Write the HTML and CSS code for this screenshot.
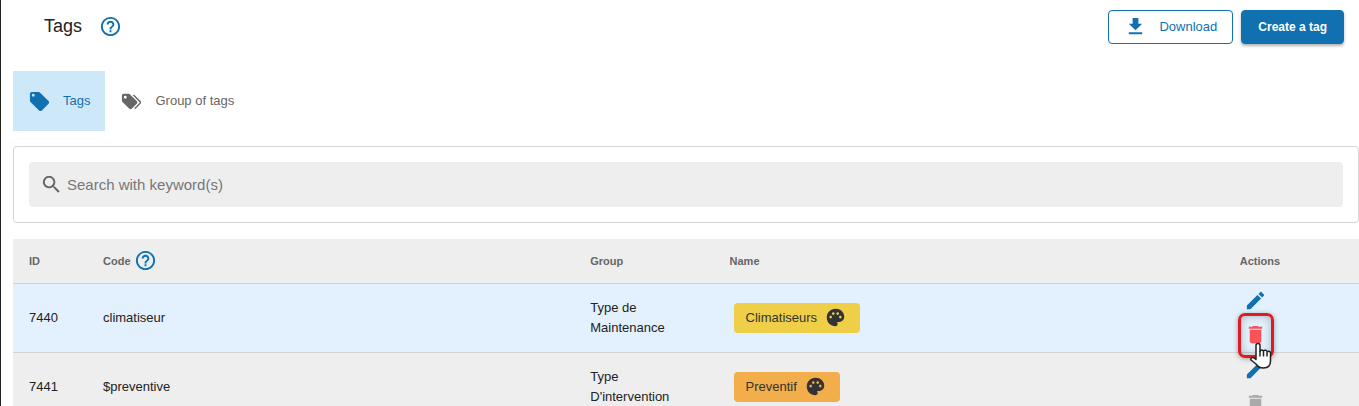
FILE: index.html
```html
<!DOCTYPE html>
<html lang="en">
<head>
<meta charset="utf-8">
<title>Tags</title>
<link rel="stylesheet" href="styles.css">
</head>
<body>
<svg class="sprite" aria-hidden="true">
  <symbol id="help" viewBox="0 0 24 24"><path d="M11 18h2v-2h-2v2zm1-16C6.480 2 2 6.480 2 12s4.480 10 10 10 10-4.480 10-10S17.520 2 12 2zm0 18c-4.410 0-8-3.590-8-8s3.590-8 8-8 8 3.590 8 8-3.590 8-8 8zm0-14c-2.210 0-4 1.790-4 4h2c0-1.100.9-2 2-2s2 .9 2 2c0 2-3 1.750-3 5h2c0-2.250 3-2.500 3-5 0-2.210-1.790-4-4-4z"/></symbol>
  <symbol id="tag" viewBox="0 0 24 24"><path d="M21.410 11.580l-9-9C12.050 2.220 11.550 2 11 2H4c-1.100 0-2 .9-2 2v7c0 .55.22 1.050.59 1.420l9 9c.36.36.86.58 1.410.58s1.050-.22 1.410-.59l7-7c.37-.36.59-.86.59-1.410s-.23-1.060-.59-1.420zM5.500 7C4.670 7 4 6.330 4 5.500S4.670 4 5.500 4 7 4.670 7 5.500 6.330 7 5.500 7z"/></symbol>
  <symbol id="tags" viewBox="0 0 24 24"><path d="M5.500 9A1.500 1.500 0 1 0 5.500 6a1.500 1.500 0 0 0 0 3m11.910 2.580c.36.360.59.860.59 1.420 0 .55-.22 1.050-.59 1.410l-5 5a1.996 1.996 0 0 1-2.830 0l-6.990-6.990C2.220 12.050 2 11.550 2 11V6c0-1.110.89-2 2-2h5c.55 0 1.050.22 1.410.58l7 7m-3.870-5.870l1-1 6.870 6.870c.37.360.59.870.59 1.420s-.22 1.050-.58 1.410l-5.380 5.380-1-1L20.750 13l-7.210-7.290z"/></symbol>
  <symbol id="download" viewBox="0 0 24 24"><path d="M19 9h-4V3H9v6H5l7 7 7-7zM5 18v2h14v-2H5z"/></symbol>
  <symbol id="search" viewBox="0 0 24 24"><path d="M15.500 14h-.79l-.28-.27C15.410 12.590 16 11.110 16 9.500 16 5.910 13.090 3 9.500 3S3 5.910 3 9.500 5.910 16 9.500 16c1.610 0 3.090-.59 4.230-1.570l.27.28v.79l5 4.990L20.490 19l-4.990-5zm-6 0C7.010 14 5 11.990 5 9.500S7.010 5 9.500 5 14 7.010 14 9.500 11.990 14 9.500 14z"/></symbol>
  <symbol id="palette" viewBox="0 0 24 24"><path d="M12 2C6.490 2 2 6.490 2 12s4.490 10 10 10c1.380 0 2.500-1.120 2.500-2.500 0-.61-.23-1.200-.64-1.670-.08-.1-.13-.21-.13-.33 0-.28.22-.5.5-.5H16c3.310 0 6-2.690 6-6 0-4.960-4.490-9-10-9zm5.500 11c-.83 0-1.500-.67-1.500-1.500s.67-1.500 1.500-1.500 1.500.67 1.500 1.500-.67 1.500-1.500 1.500zm-3-4c-.83 0-1.500-.67-1.500-1.500S13.670 6 14.500 6s1.500.67 1.500 1.500S15.330 9 14.500 9zM5 11.500c0-.83.67-1.500 1.500-1.500s1.500.67 1.500 1.500S7.330 13 6.500 13 5 12.330 5 11.500zm6-4C11 8.330 10.330 9 9.500 9S8 8.330 8 7.500 8.670 6 9.500 6s1.500.67 1.500 1.500z"/></symbol>
  <symbol id="edit" viewBox="0 0 24 24"><path d="M3 17.250V21h3.750L17.810 9.940l-3.750-3.750L3 17.250zM20.710 7.040c.39-.39.39-1.020 0-1.410l-2.340-2.340c-.39-.39-1.020-.39-1.410 0l-1.830 1.830 3.750 3.750 1.830-1.830z"/></symbol>
  <symbol id="delete" viewBox="0 0 24 24"><path d="M6 19c0 1.100.9 2 2 2h8c1.100 0 2-.9 2-2V7H6v12zM19 4h-3.500l-1-1h-5l-1 1H5v2h14V4z"/></symbol>
</svg>
<main class="page">
  <header class="header">
    <h1 class="title">Tags</h1>
    <button class="help-button" type="button" aria-label="Help"><svg class="icon-large"><use href="#help"/></svg></button>
    <div class="header-actions">
      <button class="button button-outline" type="button"><svg class="icon-large"><use href="#download"/></svg>Download</button>
      <button class="button button-primary" type="button">Create a tag</button>
    </div>
  </header>
  <nav class="tabs">
    <a class="tab tab-active" href="#tags-tab"><svg class="icon-large"><use href="#tag"/></svg>Tags</a>
    <a class="tab" href="#groups-tab"><svg class="icon-large"><use href="#tags"/></svg>Group of tags</a>
  </nav>
  <div class="search-panel">
    <label class="search-box"><svg class="icon-large"><use href="#search"/></svg>
      <input class="search-input" type="text" placeholder="Search with keyword(s)" aria-label="Search with keyword(s)"></label>
  </div>
  <table class="table">
    <colgroup><col class="col-id"><col class="col-code"><col class="col-group"><col class="col-name"><col></colgroup>
    <thead>
      <tr><th>ID</th><th><span class="code-heading">Code <button class="help-button" type="button" aria-label="Help about codes"><svg class="icon-large"><use href="#help"/></svg></button></span></th><th>Group</th><th>Name</th><th>Actions</th></tr>
    </thead>
    <tbody>
      <tr class="row-hover">
        <td>7440</td><td>climatiseur</td><td>Type de Maintenance</td>
        <td><span class="chip chip-yellow">Climatiseurs<svg class="icon"><use href="#palette"/></svg></span></td>
        <td><div class="row-actions">
          <button class="action" type="button" aria-label="Edit 7440"><svg class="icon-large"><use href="#edit"/></svg></button>
          <button class="action action-danger" type="button" aria-label="Delete 7440"><svg class="icon-large"><use href="#delete"/></svg>
            <span class="highlight"></span>
            <svg class="cursor" viewBox="0 0 22 28"><path d="M6 15V3.500a2 2 0 0 1 4 0V9.500a1.800 1.800 0 0 1 3.500 0 1.800 1.800 0 0 1 3.500 1 1.800 1.800 0 0 1 3.500 1.500V19c0 4.500-2.500 7-7 7-4 0-6-1.500-7.500-4L1 18c-.8-2 1.500-3 3-2l2 1.500z" fill="#fff" stroke="#222" stroke-width="1.500" stroke-linejoin="round"/><path d="M10 9V14.500M13.500 10V14.500M17 11V14.500" fill="none" stroke="#222" stroke-width="1.500"/></svg>
          </button>
        </div></td>
      </tr>
      <tr>
        <td>7441</td><td>$preventive</td><td>Type D'intervention</td>
        <td><span class="chip chip-orange">Preventif<svg class="icon"><use href="#palette"/></svg></span></td>
        <td><div class="row-actions">
          <button class="action" type="button" aria-label="Edit 7441"><svg class="icon-large"><use href="#edit"/></svg></button>
          <button class="action action-muted" type="button" aria-label="Delete 7441"><svg class="icon-large"><use href="#delete"/></svg></button>
        </div></td>
      </tr>
    </tbody>
  </table>
</main>
</body>
</html>
```
FILE: styles.css
```css
* { box-sizing: border-box; }
body {
  margin: 0;
  height: 100vh;
  overflow: hidden;
  background: #fff;
  color: #222;
  font: 13px/20px "Liberation Sans", Arial, sans-serif;
}
button, input { font: inherit; color: inherit; }
button { cursor: pointer; }
svg { fill: currentColor; flex: none; display: block; }
.sprite { display: none; }
.icon { width: 21px; height: 21px; }
.icon-large { width: 23px; height: 23px; }

.page {
  min-height: 100vh;
  padding-left: 12px;
  border-left: 1px solid #222;
}
.header {
  display: flex;
  align-items: center;
  height: 53px;
  padding: 0 15px 0 31px;
}
.title { margin: 0 17px 2px 0; font-size: 18px; font-weight: 400; }
.help-button {
  padding: 0;
  border: 0;
  background: none;
  color: #1170af;
}
.header-actions { display: flex; gap: 8px; margin-left: auto; }
.button {
  display: flex;
  align-items: center;
  height: 34px;
  padding: 0 15px;
  border: 1px solid #1170af;
  border-radius: 4px;
  background: #fff;
  color: #1170af;
}
.button-outline { gap: 12px; }
.button-primary {
  background: #1170af;
  color: #fff;
  font-weight: 700;
  font-size: 12px;
  padding: 0 16px;
  box-shadow: 0 2px 3px rgba(0, 0, 0, .3);
}
.tabs { display: flex; margin-top: 18px; }
.tab {
  display: flex;
  align-items: center;
  gap: 12px;
  height: 60px;
  padding: 0 15px;
  color: #666;
  text-decoration: none;
}
.tab-active { background: #cde8f9; color: #1170af; }
.search-panel {
  margin-top: 15px;
  padding: 15px;
  border: 1px solid #d3d6d8;
  border-radius: 4px;
}
.search-box {
  display: flex;
  align-items: center;
  gap: 4px;
  height: 45px;
  padding: 0 11px;
  border-radius: 4px;
  background: #eee;
  color: #666;
}
.search-input {
  flex: 1;
  min-width: 0;
  padding: 0;
  border: 0;
  outline: 0;
  background: none;
  font-size: 15px;
}
.search-input::placeholder { color: #777; opacity: 1; }

.table {
  width: 100%;
  margin-top: 16px;
  border-collapse: collapse;
  table-layout: fixed;
  background: #eee;
}
.col-id { width: 5.500%; }
.col-code { width: 36.200%; }
.col-group { width: 10.350%; }
.col-name { width: 37.900%; }
th {
  height: 44px;
  padding: 0 16px;
  text-align: left;
  font-size: 11px;
  color: #666;
}
td { height: 69px; padding: 0 16px; border-top: 1px solid #ced3d7; }
td:last-child { padding-left: 15px; }
.row-hover { background: #e2f1fd; }
.code-heading { display: flex; align-items: center; gap: 3px; }
.chip {
  display: inline-flex;
  align-items: center;
  gap: 8px;
  height: 30px;
  margin-left: 4px;
  padding: 0 14px 0 12px;
  border-radius: 4px;
  color: #333;
  vertical-align: middle;
}
.chip-yellow { background: #efcf48; }
.chip-orange { background: #f1ae4b; }
.row-actions { display: flex; flex-direction: column; }
.action {
  position: relative;
  display: grid;
  place-items: center;
  width: 34px;
  height: 34px;
  padding: 0;
  border: 0;
  background: none;
  color: #1170af;
}
.action-danger { z-index: 1; color: #fb5158; }
.action-muted { color: #aaa; }
.highlight {
  position: absolute;
  inset: -5px -1px -6px;
  border: 3px solid #e01922;
  border-radius: 7px;
  box-shadow: 0 1px 5px rgba(0, 0, 0, .35), inset 0 0 8px rgba(0, 0, 0, .25);
}
.cursor { position: absolute; left: 11px; top: 24px; width: 22px; height: 28px; }
```
